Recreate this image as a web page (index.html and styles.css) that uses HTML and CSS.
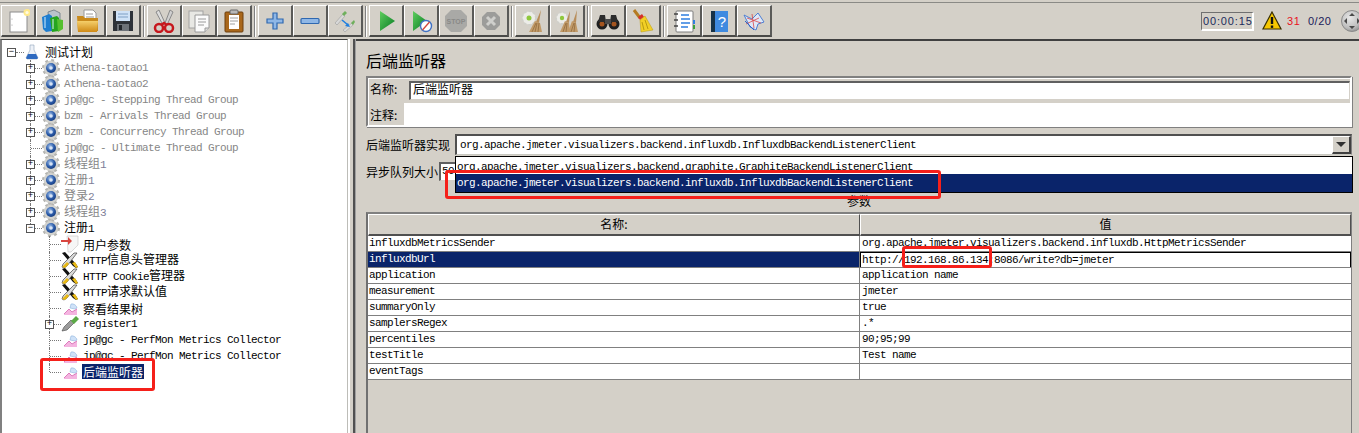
FILE: index.html
```html
<!DOCTYPE html>
<html lang="zh">
<head>
<meta charset="utf-8">
<title>后端监听器</title>
<link rel="stylesheet" href="styles.css">
</head>
<body>
<svg class="defs" width="0" height="0" aria-hidden="true">
<defs>
<linearGradient id="gfolder" x1="0" y1="0" x2="0" y2="1"><stop offset="0" stop-color="#f5cf6a"/><stop offset="1" stop-color="#cf8a16"/></linearGradient>
<linearGradient id="ggreen" x1="0" y1="0" x2="1" y2="1"><stop offset="0" stop-color="#5fce5f"/><stop offset="1" stop-color="#067a22"/></linearGradient>
<radialGradient id="gball" cx=".4" cy=".35" r=".7"><stop offset="0" stop-color="#9fc0ea"/><stop offset=".6" stop-color="#2a5aa8"/><stop offset="1" stop-color="#173c7c"/></radialGradient>
<radialGradient id="gorb" cx=".4" cy=".35" r=".7"><stop offset="0" stop-color="#e8e8e8"/><stop offset=".7" stop-color="#bdbdbd"/><stop offset="1" stop-color="#8e8e8e"/></radialGradient>
<symbol id="i-new" viewBox="0 0 24 24"><rect x="4" y="3" width="17" height="20" fill="#fff" stroke="#8c8c8c"/><circle cx="6" cy="10" r=".6" fill="#999"/><circle cx="6" cy="16" r=".6" fill="#999"/><circle cx="21" cy="3.500" r="3.500" fill="#ffe98a"/><circle cx="21" cy="3.500" r="1.600" fill="#fffbe0"/></symbol>
<symbol id="i-tpl" viewBox="0 0 24 24"><path d="M7 3l6-2 6 3v8H8z" fill="#b9c3cc" stroke="#7d8890"/><path d="M1 8l7-3 3 2v15l-6 1-3-3z" fill="#1f7ed0"/><path d="M9 9l7-2 2 2v13l-7 1z" fill="#25a51f"/><path d="M16 10l6 1v9l-5 3z" fill="#55c02f"/><path d="M4 8v11M12 10v10" stroke="#d8f0ff" stroke-width="1"/></symbol>
<symbol id="i-open" viewBox="0 0 24 24"><path d="M8 1h9l3 3v10H8z" fill="#fff" stroke="#999"/><path d="M10 5h7M10 8h8M10 11h8" stroke="#9a9a9a"/><path d="M1 7h6l2 2h13v13H2z" fill="#c98a1c"/><path d="M1 12h21l-1 11H2z" fill="url(#gfolder)"/></symbol>
<symbol id="i-save" viewBox="0 0 24 24"><path d="M2 2h20v20H2z" fill="#2e3238"/><rect x="5" y="2" width="14" height="10" fill="#cfe2f7"/><path d="M7 5h10M7 8h10" stroke="#7f9fc4"/><rect x="6" y="15" width="12" height="7" fill="#6d7278"/><rect x="8" y="16" width="3" height="5" fill="#22262b"/></symbol>
<symbol id="i-cut" viewBox="0 0 24 24"><path d="M7 1l6 13-2 2L4 3z" fill="#dcdcdc" stroke="#8a8a8a"/><path d="M18 1l-5 13 2 2 6-13z" fill="#cfcfcf" stroke="#8a8a8a"/><circle cx="7" cy="19" r="4" fill="none" stroke="#c6171d" stroke-width="2.500"/><circle cx="17" cy="19" r="4" fill="none" stroke="#c6171d" stroke-width="2.500"/><path d="M9 16l3-2 3 2" fill="none" stroke="#c6171d" stroke-width="2.500"/></symbol>
<symbol id="i-copy" viewBox="0 0 24 24"><rect x="2" y="2" width="14" height="17" fill="#e8e8e4" stroke="#a2a2a2"/><path d="M8 6h14v13l-4 4H8z" fill="#fbfbfb" stroke="#9a9a9a"/><path d="M11 10h8M11 13h8M11 16h6" stroke="#9a9a9a"/><path d="M18 23v-4h4" fill="#ddd" stroke="#9a9a9a"/></symbol>
<symbol id="i-paste" viewBox="0 0 24 24"><rect x="3" y="3" width="18" height="20" rx="1" fill="#a9671b" stroke="#6e400e"/><path d="M7 6h10v14H7z" fill="#fff"/><path d="M8 9h8M8 12h8M8 15h5" stroke="#a0a0a0"/><rect x="8" y="1" width="8" height="4" rx="1" fill="#b8b8b8" stroke="#666"/></symbol>
<symbol id="i-plus" viewBox="0 0 24 24"><path d="M10 4h4v6h6v4h-6v6h-4v-6H4v-4h6z" fill="#8fb7e6" stroke="#2f68b0" stroke-width="1.200"/></symbol>
<symbol id="i-minus" viewBox="0 0 24 24"><rect x="3" y="9.500" width="18" height="5" rx="1" fill="#8fb7e6" stroke="#2f68b0" stroke-width="1.200"/></symbol>
<symbol id="i-toggle" viewBox="0 0 24 24"><path d="M2 14l8-9 2 2-8 9z" fill="#d8d8d8" stroke="#9c9c9c" stroke-width=".6"/><path d="M9 5l3-3 2 2-3 3z" fill="#6fb05c"/><path d="M10 21l9-7 1 2-8 7z" fill="#dadada" stroke="#a0a0a0" stroke-width=".6"/><path d="M18 14l3-3 1 2-2 3z" fill="#6fb05c"/><path d="M9 11l6 5" stroke="#1e7fe0" stroke-width="1.600"/><path d="M17 18l-5-1 3-3z" fill="#1e7fe0"/></symbol>
<symbol id="i-start" viewBox="0 0 24 24"><path d="M6 2l15 10L6 22z" fill="url(#ggreen)"/></symbol>
<symbol id="i-startn" viewBox="0 0 24 24"><path d="M4 2l14 10L4 22z" fill="url(#ggreen)"/><circle cx="17" cy="17" r="5.500" fill="#fff" stroke="#3f71c4" stroke-width="1.400"/><path d="M13.500 21l7-8" stroke="#d2463c" stroke-width="1.400"/></symbol>
<symbol id="i-stop" viewBox="0 0 24 24"><path d="M7 1h10l6 6v10l-6 6H7l-6-6V7z" fill="#a9a9a6"/><text x="12" y="15" text-anchor="middle" class="stoptxt">STOP</text></symbol>
<symbol id="i-shut" viewBox="0 0 24 24"><path d="M8 3h8l5 5v8l-5 5H8l-5-5V8z" fill="#9c9c9a"/><path d="M8 8l8 8M16 8l-8 8" stroke="#cfcfcc" stroke-width="3"/></symbol>
<symbol id="i-clear" viewBox="0 0 24 24"><circle cx="9" cy="9" r="6.500" fill="#ecece8"/><circle cx="9" cy="9" r="7" fill="none" stroke="#d0d0ca" stroke-width="2" stroke-dasharray="2.600 2"/><circle cx="9" cy="9" r="2.500" fill="#8fc83d"/><path d="M21 1l-5 12 3 1z" fill="#b78d5a"/><path d="M15 12l-6 11h13l-2-9z" fill="#c19a68"/><path d="M12 23l4-9M15 23l2-9M18 23l1-9" stroke="#8b6437" stroke-width=".7"/></symbol>
<symbol id="i-clearall" viewBox="0 0 24 24"><circle cx="7" cy="9" r="5.500" fill="#ecece8"/><circle cx="7" cy="9" r="6" fill="none" stroke="#d0d0ca" stroke-width="2" stroke-dasharray="2.300 1.800"/><circle cx="7" cy="9" r="2.200" fill="#8fc83d"/><path d="M15 2l-4 11 3 1z" fill="#b78d5a"/><path d="M10 12L5 23h10l-1-9z" fill="#c19a68"/><path d="M22 1l-4 12 3 1z" fill="#b78d5a"/><path d="M17 12l-4 11h10l-2-9z" fill="#c19a68"/><path d="M8 23l3-9M11 23l1-9M16 23l3-9M19 23l1-9" stroke="#8b6437" stroke-width=".7"/></symbol>
<symbol id="i-find" viewBox="0 0 24 24"><circle cx="6" cy="15" r="5.500" fill="#1f1f1f"/><circle cx="18" cy="15" r="5.500" fill="#1f1f1f"/><circle cx="6" cy="15" r="2.500" fill="#a5551f"/><circle cx="18" cy="15" r="2.500" fill="#a5551f"/><path d="M4 6h5l1 7H2zM15 6h5l2 7h-8z" fill="#2c2c2c"/><rect x="9" y="10" width="6" height="5" fill="#4a4a4a"/></symbol>
<symbol id="i-broom" viewBox="0 0 24 24"><path d="M3 1l6 8" stroke="#b47b22" stroke-width="3"/><path d="M7 8l4-3 2 3-4 3z" fill="#d6302a"/><path d="M9 11l5-4 8 14-12 2z" fill="#f2d026" stroke="#b89a10" stroke-width=".5"/><path d="M13 21l-2-8M17 20l-3-9" stroke="#b89a10"/></symbol>
<symbol id="i-list" viewBox="0 0 24 24"><rect x="4" y="2" width="17" height="21" rx="1" fill="#fff" stroke="#7c7c7c"/><path d="M9 6h8M9 10h9M9 14h9M9 18h7" stroke="#2f7fe0" stroke-width="1.300"/><path d="M2 5h4M2 11h4M2 17h4" stroke="#444" stroke-width="1.500"/><rect x="21" y="11" width="2" height="4" fill="#2f7fe0"/><rect x="21" y="16" width="2" height="4" fill="#3ba13b"/></symbol>
<symbol id="i-help" viewBox="0 0 24 24"><path d="M4 2h5v21H4z" fill="#173248"/><rect x="8" y="2" width="13" height="21" fill="#3f8ae0"/><text x="15" y="18" text-anchor="middle" class="helptxt">?</text></symbol>
<symbol id="i-func" viewBox="0 0 24 24"><path d="M2 6l8 4 6-6 6 9-6 2-2 6-6-3-3-6z" fill="#dfe8f7" stroke="#4f7fd2"/><path d="M5 9l14 5M10 5l2 14M4 15l13-6" stroke="#d8484a" stroke-width=".8"/><path d="M3 12l9 9" stroke="#2f63c7"/></symbol>
<symbol id="i-warn" viewBox="0 0 20 20"><path d="M10 1l9 17H1z" fill="#f6c700" stroke="#3a3000" stroke-width="1.200"/><path d="M10 6v7" stroke="#111" stroke-width="2.400"/><rect x="8.800" y="14.500" width="2.400" height="2.400" fill="#111"/></symbol>
<symbol id="i-orb" viewBox="0 0 22 22"><circle cx="11" cy="11" r="10.500" fill="url(#gorb)" stroke="#8a8a8a"/><path d="M8 6l3-3 3 3zM8 16l3 3 3-3zM6 8l-3 3 3 3zM16 8l3 3-3 3z" fill="#4a4a4a"/></symbol>
<symbol id="i-gear" viewBox="0 0 18 18"><circle cx="9" cy="9" r="7.500" fill="#d2d2ce"/><circle cx="9" cy="9" r="8" fill="none" stroke="#b4b4b0" stroke-width="2" stroke-dasharray="2.900 3.380"/><circle cx="9" cy="9" r="5" fill="url(#gball)"/><circle cx="9" cy="9" r="1.800" fill="#d8e4f4"/></symbol>
<symbol id="i-flask" viewBox="0 0 16 16"><path d="M6 1h4v5l4 8-1 1H3l-1-1 4-8z" fill="#eef2f8" stroke="#8fa2bb" stroke-width=".6"/><path d="M4 10h8l2 4-1 1H3l-1-1z" fill="#2f6ac0"/></symbol>
<symbol id="i-params" viewBox="0 0 18 16"><path d="M6 0h11v9l-7 7H7z" fill="#f6f6f6" stroke="#c5c5c5" stroke-width=".6"/><path d="M0 4h7V1l4 4-4 4V6H0z" fill="#d8453f"/></symbol>
<symbol id="i-tools" viewBox="0 0 18 16"><path d="M1 1l3-1 11 12 2 3-2 1-3-2z" fill="#111"/><path d="M11 11l4 5 2-1-3-5z" fill="#e9b913"/><path d="M16 1l-3 0-11 11-1 3 2 1 3-2z" fill="#dadada" stroke="#444" stroke-width=".7"/><path d="M1 15l5-5 2 2-4 4z" fill="#e9b913"/></symbol>
<symbol id="i-chart" viewBox="0 0 18 18"><path d="M3 15l5-5 3 3 5-3v6H3z" fill="#f4b4e0"/><path d="M10 5a5 5 0 0 1 6 4l-2 1-5-1z" fill="#cfe2f8" stroke="#8fb4de" stroke-width=".6"/><path d="M3 15l5-5 3 3 5-3" fill="none" stroke="#dc7cbc"/></symbol>
<symbol id="i-pipette" viewBox="0 0 18 16"><path d="M1 15l2-4 7-7 3 3-7 7z" fill="#9c9c9c" stroke="#444" stroke-width=".6"/><path d="M10 5l5-5 3 3-5 5z" fill="#5aa945"/></symbol>
</defs>
</svg>

<div class="toolbar">
  <button class="tb"><svg class="ti"><use href="#i-new"/></svg></button>
  <button class="tb"><svg class="ti"><use href="#i-tpl"/></svg></button>
  <button class="tb"><svg class="ti"><use href="#i-open"/></svg></button>
  <button class="tb"><svg class="ti"><use href="#i-save"/></svg></button>
  <span class="sep"></span>
  <button class="tb"><svg class="ti"><use href="#i-cut"/></svg></button>
  <button class="tb"><svg class="ti"><use href="#i-copy"/></svg></button>
  <button class="tb"><svg class="ti"><use href="#i-paste"/></svg></button>
  <span class="sep"></span>
  <button class="tb"><svg class="ti"><use href="#i-plus"/></svg></button>
  <button class="tb"><svg class="ti"><use href="#i-minus"/></svg></button>
  <button class="tb"><svg class="ti"><use href="#i-toggle"/></svg></button>
  <span class="sep"></span>
  <button class="tb"><svg class="ti"><use href="#i-start"/></svg></button>
  <button class="tb"><svg class="ti"><use href="#i-startn"/></svg></button>
  <button class="tb"><svg class="ti"><use href="#i-stop"/></svg></button>
  <button class="tb"><svg class="ti"><use href="#i-shut"/></svg></button>
  <span class="sep"></span>
  <button class="tb"><svg class="ti"><use href="#i-clear"/></svg></button>
  <button class="tb"><svg class="ti"><use href="#i-clearall"/></svg></button>
  <span class="sep"></span>
  <button class="tb"><svg class="ti"><use href="#i-find"/></svg></button>
  <button class="tb"><svg class="ti"><use href="#i-broom"/></svg></button>
  <span class="sep"></span>
  <button class="tb"><svg class="ti"><use href="#i-list"/></svg></button>
  <button class="tb"><svg class="ti"><use href="#i-help"/></svg></button>
  <button class="tb"><svg class="ti"><use href="#i-func"/></svg></button>
  <div class="status">
    <span class="timer">00:00:15</span>
    <svg class="warn"><use href="#i-warn"/></svg>
    <span class="errs">31</span>
    <span class="threads">0/20</span>
    <svg class="orb"><use href="#i-orb"/></svg>
  </div>
</div>

<div class="main">
  <div class="tree">
    <div class="row root"><span class="exp">−</span><span class="dash"></span><svg class="node"><use href="#i-flask"/></svg><span class="lbl cjk">测试计划</span></div>
    <div class="group">
      <div class="row l1 off"><span class="exp">+</span><span class="dash"></span><svg class="node"><use href="#i-gear"/></svg><span class="lbl mono">Athena-taotao1</span></div>
      <div class="row l1 off"><span class="exp">+</span><span class="dash"></span><svg class="node"><use href="#i-gear"/></svg><span class="lbl mono">Athena-taotao2</span></div>
      <div class="row l1 off"><span class="exp">+</span><span class="dash"></span><svg class="node"><use href="#i-gear"/></svg><span class="lbl mono">jp@gc - Stepping Thread Group</span></div>
      <div class="row l1 off"><span class="exp">+</span><span class="dash"></span><svg class="node"><use href="#i-gear"/></svg><span class="lbl mono">bzm - Arrivals Thread Group</span></div>
      <div class="row l1 off"><span class="exp">+</span><span class="dash"></span><svg class="node"><use href="#i-gear"/></svg><span class="lbl mono">bzm - Concurrency Thread Group</span></div>
      <div class="row l1 off"><span class="noexp"></span><span class="dash"></span><svg class="node"><use href="#i-gear"/></svg><span class="lbl mono">jp@gc - Ultimate Thread Group</span></div>
      <div class="row l1 off"><span class="exp">+</span><span class="dash"></span><svg class="node"><use href="#i-gear"/></svg><span class="lbl cjk">线程组<span class="mono">1</span></span></div>
      <div class="row l1 off"><span class="exp">+</span><span class="dash"></span><svg class="node"><use href="#i-gear"/></svg><span class="lbl cjk">注册<span class="mono">1</span></span></div>
      <div class="row l1 off"><span class="exp">+</span><span class="dash"></span><svg class="node"><use href="#i-gear"/></svg><span class="lbl cjk">登录<span class="mono">2</span></span></div>
      <div class="row l1 off"><span class="exp">+</span><span class="dash"></span><svg class="node"><use href="#i-gear"/></svg><span class="lbl cjk">线程组<span class="mono">3</span></span></div>
      <div class="row l1 last"><span class="exp">−</span><span class="dash"></span><svg class="node"><use href="#i-gear"/></svg><span class="lbl cjk">注册<span class="mono">1</span></span></div>
    </div>
    <div class="group g2">
      <div class="row l2"><span class="noexp"></span><span class="dash"></span><svg class="node"><use href="#i-params"/></svg><span class="lbl cjk">用户参数</span></div>
      <div class="row l2"><span class="noexp"></span><span class="dash"></span><svg class="node"><use href="#i-tools"/></svg><span class="lbl cjk"><span class="mono">HTTP</span>信息头管理器</span></div>
      <div class="row l2"><span class="noexp"></span><span class="dash"></span><svg class="node"><use href="#i-tools"/></svg><span class="lbl cjk"><span class="mono">HTTP Cookie</span>管理器</span></div>
      <div class="row l2"><span class="noexp"></span><span class="dash"></span><svg class="node"><use href="#i-tools"/></svg><span class="lbl cjk"><span class="mono">HTTP</span>请求默认值</span></div>
      <div class="row l2"><span class="noexp"></span><span class="dash"></span><svg class="node"><use href="#i-chart"/></svg><span class="lbl cjk">察看结果树</span></div>
      <div class="row l2"><span class="exp">+</span><span class="dash"></span><svg class="node"><use href="#i-pipette"/></svg><span class="lbl mono">register1</span></div>
      <div class="row l2"><span class="noexp"></span><span class="dash"></span><svg class="node"><use href="#i-chart"/></svg><span class="lbl mono">jp@gc - PerfMon Metrics Collector</span></div>
      <div class="row l2"><span class="noexp"></span><span class="dash"></span><svg class="node"><use href="#i-chart"/></svg><span class="lbl mono">jp@gc - PerfMon Metrics Collector</span></div>
      <div class="row l2 last"><span class="noexp"></span><span class="dash"></span><svg class="node"><use href="#i-chart"/></svg><span class="lbl cjk sel">后端监听器</span></div>
    </div>
  </div>
  <div class="splitter"></div>
  <div class="panel">
    <h1 class="title">后端监听器</h1>
    <div class="namebox">
      <div class="namerow"><span class="cjk flabel">名称:</span><span class="input cjk">后端监听器</span></div>
      <div class="noterow"><span class="cjk flabel nlabel">注释:</span><span class="note"></span></div>
    </div>
    <div class="comborow">
      <span class="cjk clabel">后端监听器实现</span>
      <div class="combo"><span class="mono">org.apache.jmeter.visualizers.backend.influxdb.InfluxdbBackendListenerClient</span><span class="arrow"><i></i></span></div>
    </div>
    <div class="asyncrow">
      <span class="cjk">异步队列大小</span><span class="asyncinput mono">50</span>
    </div>
    <div class="params cjk">参数</div>
    <div class="tablewrap">
      <table class="ptable">
        <colgroup><col class="c1"><col class="c2"></colgroup>
        <thead><tr><th class="cjk">名称:</th><th class="cjk">值</th></tr></thead>
        <tbody class="mono">
          <tr><td>influxdbMetricsSender</td><td>org.apache.jmeter.visualizers.backend.influxdb.HttpMetricsSender</td></tr>
          <tr class="cur"><td>influxdbUrl</td><td><span class="edit">http://192.168.86.134:8086/write?db=jmeter</span></td></tr>
          <tr><td>application</td><td>application name</td></tr>
          <tr><td>measurement</td><td>jmeter</td></tr>
          <tr><td>summaryOnly</td><td>true</td></tr>
          <tr><td>samplersRegex</td><td>.*</td></tr>
          <tr><td>percentiles</td><td>90;95;99</td></tr>
          <tr><td>testTitle</td><td>Test name</td></tr>
          <tr><td>eventTags</td><td></td></tr>
        </tbody>
      </table>
    </div>
  </div>
</div>

<div class="popup mono">
  <div class="opt">org.apache.jmeter.visualizers.backend.graphite.GraphiteBackendListenerClient</div>
  <div class="opt on">org.apache.jmeter.visualizers.backend.influxdb.InfluxdbBackendListenerClient</div>
</div>
<div class="mark m-tree"></div>
<div class="mark m-combo"></div>
<div class="mark m-ip"></div>
</body>
</html>
```

FILE: styles.css
```css
* { box-sizing: border-box; }
html, body { margin: 0; padding: 0; }
body {
  position: relative;
  width: 1359px;
  height: 433px;
  overflow: hidden;
  background: #d4d0c8;
  color: #000;
  font: 12px "Noto Sans CJK SC", sans-serif;
}
.defs { position: absolute; }
.cjk { font-family: "Noto Sans CJK SC", "Noto Sans", sans-serif; font-size: 12px; line-height: 16px; letter-spacing: 0; }
.mono { font-family: "Liberation Mono", "DejaVu Sans Mono", monospace; font-size: 11px; letter-spacing: -.6px; color: inherit; }
.stoptxt { font: bold 7px "Liberation Sans", sans-serif; fill: #8a8a88; }
.helptxt { font: 15px "Liberation Sans", sans-serif; fill: #fff; }

/* toolbar */
.toolbar {
  display: flex;
  align-items: flex-start;
  height: 37px;
  margin-top: 2px;
  padding: 2px 0 0 1px;
  border-top: 1px solid #8a8a86;
  overflow: hidden;
}
.tb {
  flex: none;
  width: 35px;
  height: 32px;
  padding: 0;
  display: flex;
  align-items: center;
  justify-content: center;
  background: #d4d0c8;
  border: 1px solid;
  border-width: 1px 2px 2px 1px;
  border-color: #fff #5a5a58 #4a4a48 #fff;
}
.ti { width: 24px; height: 24px; display: block; }
.sep {
  flex: none;
  width: 6px;
  margin: 1px 0 0;
  height: 31px;
  background: linear-gradient(90deg, transparent 2px, #808080 2px, #808080 3px, #fff 3px, #fff 4px, transparent 4px);
}
.status {
  flex: none;
  margin-left: auto;
  width: 158px;
  height: 24px;
  margin-top: 4px;
  display: flex;
  align-items: center;
  font: 11px "Liberation Sans", sans-serif;
}
.timer {
  flex: none;
  width: 53px;
  height: 19px;
  padding-left: 1px;
  line-height: 17px;
  letter-spacing: .85px;
  color: #1c2c5c;
  border: 1px solid;
  border-color: #707070 #fff #fff #707070;
  border-width: 1px 2px 2px 1px;
}
.warn { flex: none; width: 20px; height: 20px; margin-left: 8px; }
.errs { flex: none; margin-left: 5px; color: #e8101c; letter-spacing: .6px; width: 21px; }
.threads { flex: none; width: 33px; color: #1a1a5a; letter-spacing: .5px; }
.orb { flex: none; width: 22px; height: 22px; }

/* main area */
.main { display: flex; height: 394px; }
.tree {
  flex: none;
  width: 348px;
  height: 100%;
  padding-top: 4px;
  background: #fff;
  border-left: 2px solid #808080;
  border-top: 1px solid #404040;
  border-right: 1px solid #bdbdb8;
}
.splitter {
  flex: none;
  width: 8px;
  background: linear-gradient(90deg, #fff 0 2px, #d4d0c8 2px 5px, #505050 5px 7px, #a0a0a0 7px);
}
.row {
  position: relative;
  display: flex;
  align-items: center;
  height: 16px;
  white-space: nowrap;
}
.root { padding-left: 5px; }
.l1 { padding-left: 24px; }
.l2 { padding-left: 43px; }
.exp {
  flex: none;
  width: 9px;
  height: 9px;
  border: 1px solid #555;
  background: #fff;
  font: 9px/7px "Liberation Mono", monospace;
  text-align: center;
  position: relative;
  z-index: 1;
}
.noexp { flex: none; width: 9px; height: 9px; }
.dash { flex: none; width: 7px; border-top: 1px dotted #777; }
.root .dash { width: 8px; }
.node { flex: none; width: 18px; height: 18px; }
.root .node { width: 16px; height: 16px; }
.lbl { line-height: 15px; margin-left: 4px; }
.root .lbl { margin-left: 5px; position: relative; top: -1px; }
.off .lbl { color: #868686; }
.off .lbl .mono { color: #7d7d98; }
/* dotted tree guides */
.l1::before, .l2::before {
  content: "";
  position: absolute;
  top: 0;
  bottom: 0;
  border-left: 1px dotted #777;
}
.l1::before { left: 28px; }
.l2::before { left: 47px; }
.l1.last::before, .l2.last::before { bottom: 8px; }
.row > .noexp + .dash { margin-left: -4px; width: 11px; }
.lbl.sel { background: #0a246a; color: #fff; margin-left: 3px; padding: 0 1px; position: relative; top: -1px; }

/* right panel */
.panel {
  flex: 1;
  min-width: 0;
  height: 100%;
  padding: 0 7px 0 10px;
  border-top: 2px solid #404040;
  display: flex;
  flex-direction: column;
}
.title {
  margin: 9px 0 6px;
  height: 20px;
  font-weight: 400;
  font-size: 16px;
  line-height: 20px;
}
.namebox {
  flex: none;
  height: 51px;
  padding: 2px 0 0 2px;
  border: 2px solid;
  border-color: #808080 #fff #fff #808080;
  box-shadow: inset 1px 1px 0 #fff, 1px 1px 0 #808080;
}
.namerow { display: flex; align-items: center; height: 20px; }
.flabel { flex: none; width: 39px; }
.namerow .flabel { margin-bottom: 3px; }
.input {
  flex: 1;
  height: 19px;
  line-height: 12px;
  padding-left: 2px;
  background: #fff;
  border: 1px solid;
  border-width: 2px 1px 1px 2px;
  border-color: #606060 #d4d0c8 #d4d0c8 #606060;
}
.noterow { display: flex; align-items: center; height: 23px; margin-top: 3px; }
.nlabel { width: 34px; }
.note { flex: 1; height: 23px; background: #fff; }
.comborow { display: flex; align-items: center; height: 21px; margin-top: 7px; }
.clabel { flex: none; width: 89px; }
.combo {
  flex: 1;
  display: flex;
  align-items: center;
  justify-content: space-between;
  height: 21px;
  padding-left: 3px;
  background: #fff;
  border: 1px solid;
  border-width: 2px 1px 1px 2px;
  border-color: #505050 #808080 #c8c8c0 #505050;
}
.arrow {
  flex: none;
  width: 19px;
  height: 18px;
  display: flex;
  align-items: center;
  justify-content: center;
  background: #d4d0c8;
  border: 1px solid;
  border-color: #fff #404040 #404040 #fff;
  border-width: 1px 2px 2px 1px;
}
.arrow i {
  display: block;
  width: 0;
  height: 0;
  border: 5px solid transparent;
  border-top: 5px solid #303030;
  border-bottom: 0;
}
.asyncrow { display: flex; align-items: center; height: 19px; margin-top: 7px; }
.asyncinput {
  width: 17px;
  height: 19px;
  line-height: 15px;
  margin-left: 1px;
  padding-left: 1px;
  overflow: hidden;
  background: #fff;
  border: 1px solid;
  border-width: 2px 0 1px 2px;
  border-color: #606060 #d4d0c8 #d4d0c8 #606060;
}
.params { flex: none; height: 14px; margin-top: 13px; margin-bottom: 4px; text-align: center; line-height: 14px; }
.tablewrap {
  flex: 1;
  min-height: 0;
  overflow: hidden;
  border: 1px solid;
  border-width: 2px 1px 0 2px;
  border-color: #808080 #808080 #808080 #707070;
}
.ptable { width: 100%; table-layout: fixed; border-collapse: separate; border-spacing: 0; }
.c1 { width: 492px; }
.ptable th {
  height: 22px;
  padding: 0 0 2px;
  font-weight: 400;
  background: #d4d0c8;
  border: 1px solid;
  border-color: #fff #505050 #505050 #fff;
  border-width: 1px 1px 2px 1px;
}
.ptable td {
  height: 16px;
  padding: 0 0 0 1px;
  overflow: hidden;
  white-space: nowrap;
  line-height: 15px;
  background: #fff;
  border-bottom: 1px solid #808080;
}
.ptable td:first-child { border-right: 1px solid #808080; }
.ptable td + td { padding-left: 2px; }
.cur td:first-child { background: #0a246a; color: #fff; }
.ptable .cur td + td { padding-left: 0; }
.edit {
  display: block;
  height: 16px;
  margin: 0 0 -1px 0;
  padding-left: 1px;
  line-height: 14px;
  background: #fff;
  border: 1px solid #000;
}

/* overlays */
.popup {
  position: absolute;
  left: 455px;
  top: 156px;
  width: 898px;
  height: 37px;
  background: #fff;
  border: 1px solid #000;
}
.opt { height: 17px; line-height: 20px; padding-left: 1px; white-space: nowrap; }
.opt.on { height: 18px; line-height: 18px; background: #0a246a; color: #fff; }
.mark { position: absolute; border: 3px solid #f5201a; border-radius: 3px; }
.m-tree { left: 40px; top: 358px; width: 115px; height: 33px; }
.m-combo { left: 445px; top: 170px; width: 496px; height: 29px; }
.m-ip { left: 902px; top: 246px; width: 90px; height: 22px; }
```
